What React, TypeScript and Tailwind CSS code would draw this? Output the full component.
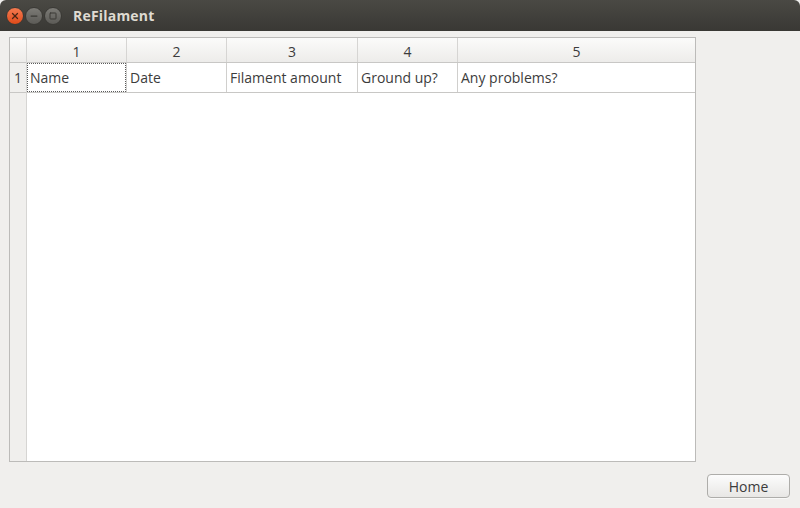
import { X, Minus, Square } from 'lucide-react';

const font = { fontFamily: '"Open Sans", "Noto Sans", sans-serif' };

const cols = [
  { label: '1', w: 'w-[100px]', cell: 'Name' },
  { label: '2', w: 'w-[100px]', cell: 'Date' },
  { label: '3', w: 'w-[131px]', cell: 'Filament amount' },
  { label: '4', w: 'w-[100px]', cell: 'Ground up?' },
  { label: '5', w: 'flex-1', cell: 'Any problems?' },
];

export default function App() {
  return (
    <div className="w-[800px] h-[508px] flex flex-col bg-[#f0efed] overflow-hidden text-[#3c3c3c]" style={font}>
      {/* Title bar */}
      <div className="h-[31px] flex items-center bg-gradient-to-b from-[#4a4944] to-[#393834] rounded-t-[6px]">
        <div className="flex items-center gap-[1px] pl-[6px]">
          <div className="w-[18px] h-[18px] rounded-full bg-gradient-to-b from-[#f47a4f] to-[#df4a16] border border-[#3a3935] flex items-center justify-center">
            <X className="w-[10px] h-[10px] text-[#4a2514]" strokeWidth={3} />
          </div>
          <div className="w-[18px] h-[18px] rounded-full bg-gradient-to-b from-[#7c7b76] to-[#5c5b57] border border-[#3a3935] flex items-center justify-center">
            <Minus className="w-[10px] h-[10px] text-[#3a3935]" strokeWidth={3} />
          </div>
          <div className="w-[18px] h-[18px] rounded-full bg-gradient-to-b from-[#7c7b76] to-[#5c5b57] border border-[#3a3935] flex items-center justify-center">
            <Square className="w-[8px] h-[8px] text-[#3a3935]" strokeWidth={3} />
          </div>
        </div>
        <span className="ml-[11px] text-[14px] font-bold text-[#dfdbd2] tracking-[0.2px]">ReFilament</span>
      </div>

      {/* Body */}
      <div className="flex-1 flex flex-col px-[9px] pt-[6px]">
        <div className="w-[687px] h-[425px] border border-[#bcbbb9] bg-white flex">
          {/* Vertical header */}
          <div className="w-[17px] flex flex-col bg-[#f0efed] border-r border-[#d6d5d3]">
            <div className="h-[25px] border-b border-[#c8c7c5] bg-gradient-to-b from-[#fbfbfa] to-[#edecea]" />
            <div className="h-[30px] border-b border-[#c8c7c5] flex items-center justify-center text-[14px] text-[#3c3c3c]">1</div>
          </div>
          <div className="flex-1 flex flex-col">
            {/* Horizontal header */}
            <div className="h-[25px] flex border-b border-[#c8c7c5] bg-gradient-to-b from-[#fbfbfa] to-[#edecea]">
              {cols.map((c, i) => (
                <div
                  key={c.label}
                  className={`${c.w} flex items-center justify-center pt-[2px] text-[14px] text-[#3c3c3c] ${i < cols.length - 1 ? 'border-r border-[#d6d5d3]' : ''}`}
                >
                  {c.label}
                </div>
              ))}
            </div>
            {/* Row */}
            <div className="h-[30px] flex border-b border-[#c8c7c5]">
              {cols.map((c, i) => (
                <div
                  key={c.label}
                  className={`${c.w} relative flex items-center pl-[3px] text-[14px] text-[#3c3c3c] ${i < cols.length - 1 ? 'border-r border-[#d0cfcd]' : ''}`}
                >
                  {i === 0 && (
                    <div className="absolute inset-0 border border-dotted border-[#5a5a5a]" />
                  )}
                  {c.cell}
                </div>
              ))}
            </div>
          </div>
        </div>

        {/* Footer */}
        <div className="flex justify-end mt-[12px] pr-[1px]">
          <button className="w-[83px] h-[24px] rounded-[4px] border border-[#aeadaa] bg-gradient-to-b from-[#fcfcfc] to-[#e8e7e5] text-[14px] text-[#3c3c3c] flex items-center justify-center shadow-[0_1px_0_rgba(255,255,255,0.6)]">
            Home
          </button>
        </div>
      </div>
    </div>
  );
}
